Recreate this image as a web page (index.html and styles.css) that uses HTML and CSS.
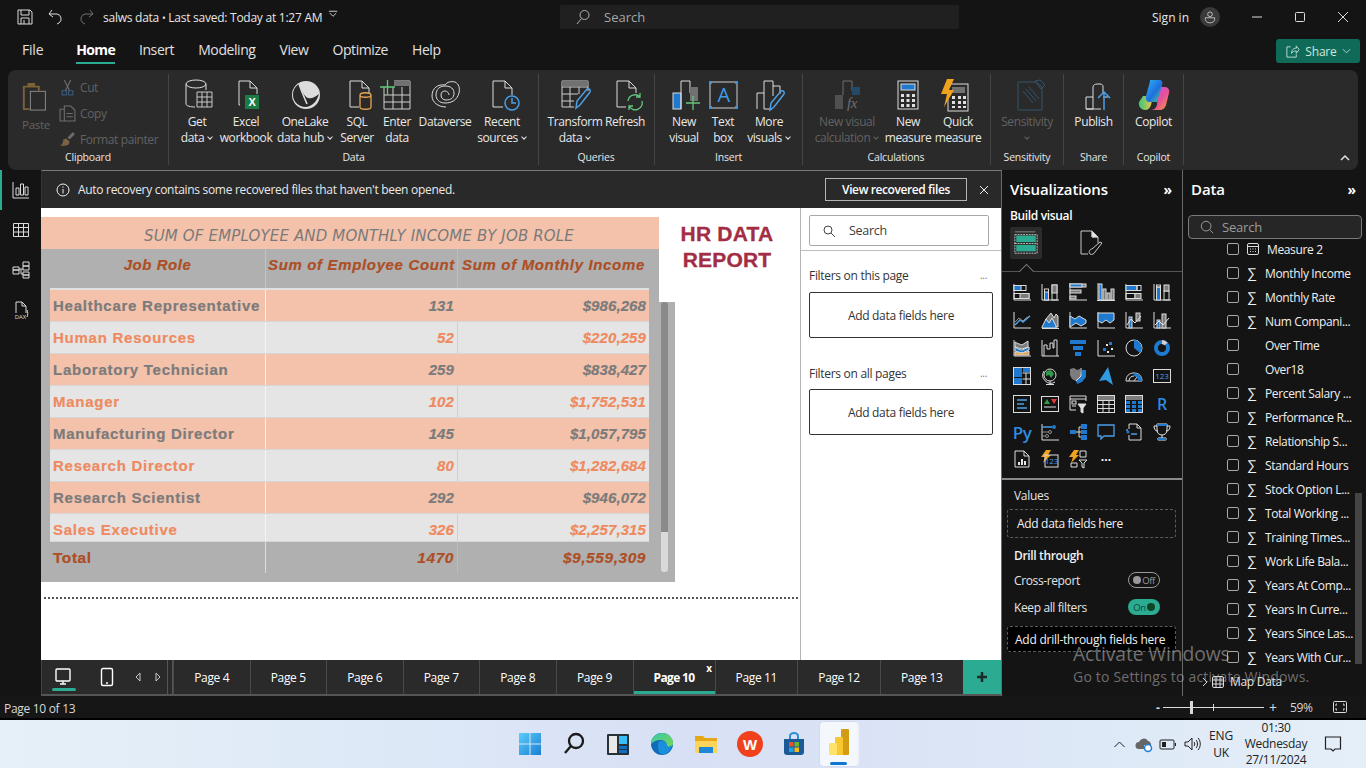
FILE: index.html
```html
<!DOCTYPE html>
<html lang="en">
<head>
<meta charset="utf-8">
<title>salws data - Power BI Desktop</title>
<link rel="stylesheet" href="styles.css">
</head>
<body>
<div class="app">
  <header class="topbar">
    <div class="quick">
      <svg class="ic q1" viewBox="0 0 18 18"><path d="M2 2h12l2 2v12H2zM5 2v5h8V2M5 16v-6h8v6M8 16v-4"/></svg>
      <svg class="ic q2" viewBox="0 0 18 18"><path d="M5 2 2 6l4 3M2 6h8a5 5 0 0 1 2 9l-2 1"/></svg>
      <svg class="ic q3 dimline" viewBox="0 0 18 18"><path d="m13 2 3 4-4 3M16 6H8a5 5 0 0 0-2 9l2 1"/></svg>
      <span class="doc">salws data <b class="dot">•</b> Last saved: Today at 1:27 AM</span>
      <svg class="ic q4" viewBox="0 0 12 8"><path d="M1 1h9M2 3l3.500 3.500L9 3"/></svg>
    </div>
    <div class="gsearch">
      <svg class="ic sm" viewBox="0 0 16 16"><circle cx="9.500" cy="6" r="4.500"/><path d="M6.500 9.500 2 15"/></svg>
      <span>Search</span>
    </div>
    <div class="account">
      <span class="signin">Sign in</span>
      <span class="avatar"><svg class="ic avatar-i" viewBox="0 0 18 18"><circle cx="9" cy="5.500" r="3"/><path d="M3 10h12v2a6 4.500 0 0 1-12 0z"/></svg></span>
      <div class="winctl">
        <svg class="ic wc" viewBox="0 0 12 12"><path d="M1 6h10"/></svg>
        <svg class="ic wc" viewBox="0 0 12 12"><rect x="1.500" y="1.500" width="9" height="9" rx="1"/></svg>
        <svg class="ic wc" viewBox="0 0 12 12"><path d="m1 1 10 10M11 1 1 11"/></svg>
      </div>
    </div>
  </header>

  <nav class="menubar">
    <span class="mi mi-file">File</span>
    <span class="mi mi-on">Home</span>
    <span class="mi">Insert</span>
    <span class="mi">Modeling</span>
    <span class="mi">View</span>
    <span class="mi">Optimize</span>
    <span class="mi">Help</span>
    <button class="share">
      <svg class="ic sh" viewBox="0 0 16 16"><path d="M6 3H2v11h10v-3M7 10c0-4 2-5.500 5-5.500V2l3 4-3 4V7.500C9.500 7.500 8 8 7 10z"/></svg>
      <span>Share</span>
      <svg class="ic chev" viewBox="0 0 10 6"><path d="m1 1 4 4 4-4"/></svg>
    </button>
  </nav>

  <section class="ribbon">
    <div class="grp g-clip">
      <div class="grp-body clip">
        <div class="paste">
          <svg class="ic r32" viewBox="0 0 32 34"><path class="brown" d="M2 6h5V3h8v3h5v5h-2V8H4v22h5v2H2z"/><rect class="gline" x="10" y="12" width="16" height="20"/></svg>
          <span class="dis">Paste</span>
        </div>
        <div class="clip-list">
          <div class="cl"><svg class="ic r16 dimline" viewBox="0 0 16 16"><path d="m5 1 5 10M11 1 6 11"/><rect class="scis" x="3" y="11" width="4" height="4"/><rect class="scis" x="9" y="11" width="4" height="4"/></svg><span class="dis">Cut</span></div>
          <div class="cl"><svg class="ic r16 dimline" viewBox="0 0 16 16"><path d="M5 4H1v11h4M5 1h6l4 4v10H5zM7 8h6M7 11h6"/></svg><span class="dis">Copy</span></div>
          <div class="cl"><svg class="ic r16" viewBox="0 0 16 16"><path class="brownf" d="M1 14c2-1 3-3 3-6l3-1 3 3-1 3c-2 1-5 1-8 1z"/><path class="dimf" d="m8 6 5-5 2 2-5 5z"/></svg><span class="dis">Format painter</span></div>
        </div>
      </div>
      <div class="grp-label">Clipboard</div>
    </div>

    <div class="grp g-data">
      <div class="grp-body">
        <div class="rb w36">
          <svg class="ic r32" viewBox="-3 0 32 32"><ellipse cx="12" cy="5" rx="10" ry="4"/><path d="M2 5v20c0 2 5 3 9 3M22 5v6"/><path class="tbl" d="M13 13h15v15H13zM13 18h15M13 23h15M18 13v15M23 13v15"/></svg>
          <span>Get</span><span>data<i class="cv"></i></span>
        </div>
        <div class="rb w62">
          <svg class="ic r32" viewBox="-3 0 32 32"><path d="M7 26H6V2h11l7 7v6M17 2v7h7"/><rect class="xl" x="12" y="16" width="14" height="14"/><text class="xltxt" x="19" y="27">X</text></svg>
          <span>Excel</span><span>workbook</span>
        </div>
        <div class="rb w56">
          <svg class="ic r32" viewBox="-1 0 32 32"><circle class="olk" cx="16" cy="16" r="14"/><path class="olk2" d="M9 5c3 8 6 13 9 14 4 1 7-1 11-4-2 7-6 12-13 13-8 0-13-6-13-12S6 7 9 5z"/><path class="olk3" d="M9 5c3 9 6 15 8 20"/></svg>
          <span>OneLake</span><span>data hub<i class="cv"></i></span>
        </div>
        <div class="rb w48">
          <svg class="ic r32" viewBox="-4 0 32 32"><path d="M14 28H5V2h12l7 7v5M17 2v7h7"/><path class="or" d="M15 16c0-3 11-3 11 0v12c0 3-11 3-11 0zM15 16c0 3 11 3 11 0"/></svg>
          <span>SQL</span><span>Server</span>
        </div>
        <div class="rb w32">
          <svg class="ic r32" viewBox="1 0 32 32"><path class="tbl2" d="M4 8v22h26V2h-16M4 16h26M4 23h26M13 8v22M22 8v22"/><rect class="gr" x="14" y="2" width="16" height="5"/><path class="grn" d="M0 8h15M7.500 1v15"/></svg>
          <span>Enter</span><span>data</span>
        </div>
        <div class="rb w64">
          <svg class="ic r32" viewBox="-1 0 32 32"><path d="M16 28C8 28 2 23 2 17 2 9 8 5 15 6M15 6c2-3 6-4 10-3 4 2 5 6 4 11-2 7-7 10-14 10-6 0-9-4-9-8 0-6 4-9 9-9 6 0 9 3 9 7 0 5-3 7-8 7-3 0-5-2-5-5s2-4 4-4 4 2 4 4"/></svg>
          <span>Dataverse</span><span>&nbsp;</span>
        </div>
        <div class="rb w50">
          <svg class="ic r32" viewBox="-2 0 32 32"><path d="M15 28H5V2h12l7 7v7M17 2v7h7"/><circle class="bls" cx="24" cy="24" r="7"/><path class="bls" d="M24 19v5h4"/></svg>
          <span>Recent</span><span>sources<i class="cv"></i></span>
        </div>
      </div>
      <div class="grp-label">Data</div>
    </div>

    <div class="grp g-query">
      <div class="grp-body">
        <div class="rb w54">
          <svg class="ic r32" viewBox="-1 0 32 32"><path class="tbl2" d="M14 28H2V2h26v10M2 8h26M2 15h16M2 22h12M10 8v20M19 8v7"/><path class="gr" d="M2 2h26v5H2z"/><path class="bls2" d="m16 29 1-7 10-12c2-1 4 1 3 3L20 26z"/></svg>
          <span>Transform</span><span>data<i class="cv"></i></span>
        </div>
        <div class="rb w46">
          <svg class="ic r32" viewBox="-3 0 32 32"><path d="M14 28H5V2h12l7 7v5M17 2v7h7"/><path class="grn" d="M16 22a7 7 0 0 1 12-4M30 22a7 7 0 0 1-13 5M28 14v4h-4M17 31v-4h4"/></svg>
          <span>Refresh</span><span>&nbsp;</span>
        </div>
      </div>
      <div class="grp-label">Queries</div>
    </div>

    <div class="grp g-insert">
      <div class="grp-body">
        <div class="rb w38">
          <svg class="ic r32" viewBox="-4 0 32 32"><rect class="bf" x="1" y="14" width="8" height="16"/><path d="M9 30V2h9v12"/><rect class="gr" x="18" y="8" width="8" height="14"/><path class="grn" d="M14 24h14M21 17v14"/></svg>
          <span>New</span><span>visual</span>
        </div>
        <div class="rb w40">
          <svg class="ic r32" viewBox="-1 0 32 32"><rect class="tb" x="2" y="3" width="27" height="26"/><path class="dots" d="M1 2h3v3H1zM27 2h3v3h-3zM1 27h3v3H1zM27 27h3v3h-3z"/><text class="atx" x="15.500" y="23">A</text></svg>
          <span>Text</span><span>box</span>
        </div>
        <div class="rb w52">
          <svg class="ic r32" viewBox="-2 0 32 32"><path d="M2 30V14h7V2h9v15M9 14v16h8M18 7h7v8"/><path class="bls2" d="m15 31 1-7 10-12c2-1 4 1 3 3L19 28z"/></svg>
          <span>More</span><span>visuals<i class="cv"></i></span>
        </div>
      </div>
      <div class="grp-label">Insert</div>
    </div>

    <div class="grp g-calc">
      <div class="grp-body">
        <div class="rb w70">
          <svg class="ic r32" viewBox="0 0 32 32"><rect class="dimf2" x="4" y="16" width="8" height="14"/><path class="dimline" d="M12 16V2h9v10"/><rect class="dimblue" x="21" y="8" width="8" height="8"/><text class="fx" x="16" y="29">fx</text></svg>
          <span class="dis">New visual</span><span class="dis">calculation<i class="cv"></i></span>
        </div>
        <div class="rb w52">
          <svg class="ic r32" viewBox="0 0 32 32"><rect x="6" y="2" width="20" height="28"/><rect class="bf" x="9" y="5" width="14" height="6"/><path class="keys" d="M9 15h3v3H9zM14.500 15h3v3h-3zM20 15h3v3h-3zM9 20h3v3H9zM14.500 20h3v3h-3zM20 20h3v3h-3zM9 25h3v3H9zM14.500 25h3v3h-3zM20 25h3v3h-3z"/></svg>
          <span>New</span><span>measure</span>
        </div>
        <div class="rb w48">
          <svg class="ic r32" viewBox="2 0 32 32"><rect x="8" y="5" width="20" height="27"/><rect class="gr" x="12" y="8" width="13" height="6"/><path class="keys" d="M12 17h3v3h-3zM18 17h3v3h-3zM23 17h3v3h-3zM12 22h3v3h-3zM18 22h3v3h-3zM23 22h3v3h-3zM12 27h3v2h-3zM18 27h3v2h-3zM23 27h3v2h-3z"/><path class="bolt" d="M7 0h7L9 11h5L4 28l3-13H1z"/></svg>
          <span>Quick</span><span>measure</span>
        </div>
      </div>
      <div class="grp-label">Calculations</div>
    </div>

    <div class="grp g-sens">
      <div class="grp-body center">
        <div class="rb wfull">
          <svg class="ic r32" viewBox="-4 0 32 32"><path class="dimblues" d="M3 3h18l6 5v23H3zM8 12l10 12M11 10l10 12M14 8l10 12M20 2l6 8 4-4-5-5z"/></svg>
          <span class="dis">Sensitivity</span><span class="dis"><i class="cv cv-only"></i></span>
        </div>
      </div>
      <div class="grp-label">Sensitivity</div>
    </div>

    <div class="grp g-share">
      <div class="grp-body center">
        <div class="rb wfull">
          <svg class="ic r32" viewBox="-6 0 32 32"><path d="M2 30V18h7v12zM9 18V8c0-2 2-3 4-3h3c2 0 3 1 3 3v7M19 18h5M2 30h15"/><path class="bls" d="M20 31V13M14 19l6-6 6 6"/></svg>
          <span>Publish</span><span>&nbsp;</span>
        </div>
      </div>
      <div class="grp-label">Share</div>
    </div>

    <div class="grp g-copilot">
      <div class="grp-body center">
        <div class="rb wfull">
          <svg class="ic r32 nostroke" viewBox="0 0 32 32">
            <defs>
              <linearGradient id="cp1" x1="0" y1="0" x2="1" y2="1"><stop offset="0" stop-color="#2bb7f3"/><stop offset=".55" stop-color="#1f6fe0"/><stop offset="1" stop-color="#48d67b"/></linearGradient>
              <linearGradient id="cp2" x1="0" y1="0" x2="1" y2="1"><stop offset="0" stop-color="#a55cf0"/><stop offset=".55" stop-color="#e84f9d"/><stop offset="1" stop-color="#f4a52d"/></linearGradient>
              <linearGradient id="cp3" x1="0" y1="0" x2="1" y2="0"><stop offset="0" stop-color="#35c77d"/><stop offset="1" stop-color="#f6c544"/></linearGradient>
            </defs>
            <path class="cp2" d="M20 8h7c3 0 5 3 4 6l-3 12c-1 3-3 5-7 5H12c4 0 6-2 7-5z"/>
            <path class="cp3" d="M5 17h10l-2 9c-1 3-3 5-6 5-4 0-7-4-6-8z"/>
            <path class="cp1" d="M12 1h9c3 0 4 2 3 5l-5 17h-7c-3 0-5-2-4-6l3-11c1-3 1-5 1-5z"/>
          </svg>
          <span>Copilot</span><span>&nbsp;</span>
        </div>
      </div>
      <div class="grp-label">Copilot</div>
    </div>
    <svg class="ic collapse" viewBox="0 0 10 6"><path d="m1 5 4-4 4 4"/></svg>
  </section>

  <main class="work">
    <aside class="rail">
      <div class="rail-item rail-on"><svg class="ic r18" viewBox="0 0 18 18"><path d="M1 1v16h16M4 14V7h3v7zM8.500 14V3h3v11zM13 14V6h3v8z"/></svg></div>
      <div class="rail-item"><svg class="ic r18" viewBox="0 0 18 18"><path d="M1.500 2.500h15v13h-15zM1.500 6.500h15M1.500 11h15M6.500 2.500v13M11.500 2.500v13"/></svg></div>
      <div class="rail-item"><svg class="ic r18" viewBox="0 0 18 18"><path d="M11 1h6v4h-6zM11 5h6v4h-6zM1 6h6v3H1zM1 9h6v4H1zM11 11h6v3h-6zM11 14h6v3h-6zM7 8h4M9 8v5h2"/></svg></div>
      <div class="rail-item rail-dax"><svg class="ic r18" viewBox="0 0 18 18"><path d="M4 12V1h6l4 4v7M10 1v4h4"/><path d="M15 9c1 2 1 5 0 7"/></svg><span class="dax">DAX</span></div>
    </aside>

    <div class="center-col">
      <div class="notice">
        <svg class="ic info" viewBox="0 0 14 14"><circle cx="7" cy="7" r="6"/><path d="M7 6v4.500M7 3.500v1.200"/></svg>
        <span>Auto recovery contains some recovered files that haven't been opened.</span>
        <button class="recover">View recovered files</button>
        <svg class="ic close" viewBox="0 0 12 12"><path d="m2 2 8 8M10 2l-8 8"/></svg>
      </div>

      <div class="stage">
        <div class="canvas">
          <div class="visual">
            <div class="v-title">SUM OF EMPLOYEE AND MONTHLY INCOME BY JOB ROLE</div>
            <div class="v-table">
              <div class="row head"><span class="c1">Job Role</span><span class="c2">Sum of Employee Count</span><span class="c3">Sum of Monthly Income</span></div>
              <div class="row a"><span class="c1">Healthcare Representative</span><span class="c2">131</span><span class="c3">$986,268</span></div>
              <div class="row b"><span class="c1">Human Resources</span><span class="c2">52</span><span class="c3">$220,259</span></div>
              <div class="row a"><span class="c1">Laboratory Technician</span><span class="c2">259</span><span class="c3">$838,427</span></div>
              <div class="row b"><span class="c1">Manager</span><span class="c2">102</span><span class="c3">$1,752,531</span></div>
              <div class="row a"><span class="c1">Manufacturing Director</span><span class="c2">145</span><span class="c3">$1,057,795</span></div>
              <div class="row b"><span class="c1">Research Director</span><span class="c2">80</span><span class="c3">$1,282,684</span></div>
              <div class="row a"><span class="c1">Research Scientist</span><span class="c2">292</span><span class="c3">$946,072</span></div>
              <div class="row b last"><span class="c1">Sales Executive</span><span class="c2">326</span><span class="c3">$2,257,315</span></div>
              <div class="row total"><span class="c1">Total</span><span class="c2">1470</span><span class="c3">$9,559,309</span></div>
              <div class="vscroll"></div>
            </div>
          </div>
          <div class="hr-title">HR DATA<br>REPORT</div>
          <div class="dotline"></div>
        </div>

        <aside class="filters">
          <div class="f-top">
            <div class="f-search">
              <svg class="ic dark r14" viewBox="0 0 14 14"><circle cx="6" cy="6" r="4"/><path d="m9 9 4 4"/></svg>
              <span>Search</span>
            </div>
          </div>
          <div class="f-head f-head1"><span>Filters on this page</span><span class="more">...</span></div>
          <div class="f-box">Add data fields here</div>
          <div class="f-head f-head2"><span>Filters on all pages</span><span class="more">...</span></div>
          <div class="f-box">Add data fields here</div>
        </aside>
      </div>

      <div class="pagebar">
        <div class="devices">
          <div class="dev dev-on"><svg class="ic r18" viewBox="0 0 18 18"><rect x="2" y="1" width="14" height="12" rx="1"/><path d="M6 16h6M9 13v3"/></svg></div>
          <div class="dev"><svg class="ic r18" viewBox="0 0 18 18"><rect x="3.500" y=".500" width="11" height="17" rx="1.500"/><path d="M8 15h2"/></svg></div>
          <svg class="ic arrow" viewBox="0 0 6 10"><path d="M5 1 1 5l4 4z"/></svg>
          <svg class="ic arrow" viewBox="0 0 6 10"><path d="m1 1 4 4-4 4z"/></svg>
        </div>
        <div class="tab">Page 4</div>
        <div class="tab">Page 5</div>
        <div class="tab">Page 6</div>
        <div class="tab">Page 7</div>
        <div class="tab">Page 8</div>
        <div class="tab tab-s">Page 9</div>
        <div class="tab tab-on">Page 10<span class="tab-x">x</span></div>
        <div class="tab tab-w">Page 11</div>
        <div class="tab tab-w">Page 12</div>
        <div class="tab tab-w">Page 13</div>
        <div class="tab-add"><svg class="ic plus" viewBox="0 0 12 12"><path d="M6 1v10M1 6h10"/></svg></div>
      </div>
    </div>

    <aside class="vis">
      <div class="pane-head"><span>Visualizations</span><span class="dbl">»</span></div>
      <div class="sub">Build visual</div>
      <div class="vis-tabs">
        <div class="vt-on">
          <svg class="ic r28" viewBox="0 0 28 28"><path class="gline" d="M2 2h22"/><rect class="tealf" x="3.500" y="6" width="21" height="7"/><rect class="tealf" x="3.500" y="16" width="21" height="7"/><path class="dash" d="M2 5h24v20H2zM2 14.500h24"/></svg>
        </div>
        <svg class="ic vt2" viewBox="0 0 26 26"><path d="M10 24H3V1h11l6 6v6M14 1v6h6"/><path class="fillw" d="M14 1l6 6h-6z"/><path d="M12 24c-2-2 0-5 2-5l8-7 2 1-7 9c-1 2-3 3-5 2z"/></svg>
      </div>
      <div class="notchline"></div>

      <div class="vizgrid">
        <svg class="ic v" viewBox="0 0 18 18"><path d="M1 1v16h17"/><rect x="1" y="2.500" width="12" height="5"/><rect class="bf" x="1" y="2.500" width="7" height="5"/><rect x="1" y="10.500" width="15" height="5"/><rect class="gf" x="7" y="10.500" width="9" height="5"/></svg>
        <svg class="ic v" viewBox="0 0 18 18"><path d="M1 1v16h17"/><rect x="3.500" y="6" width="4" height="11"/><rect class="bf" x="3.500" y="9" width="4" height="8"/><rect x="11" y="2" width="5" height="15"/><rect class="gf" x="11" y="2" width="5" height="8"/></svg>
        <svg class="ic v" viewBox="0 0 18 18"><path d="M1 0v18"/><rect class="gf" x="1" y="1" width="16" height="3"/><rect class="bf" x="1" y="1" width="12" height="3"/><rect class="gf" x="1" y="7" width="11" height="3"/><rect class="gf" x="1" y="13" width="6" height="3"/><path d="M2 17h16"/></svg>
        <svg class="ic v" viewBox="0 0 18 18"><path d="M0 17.500h18M1 0v17"/><rect class="bf" x="2" y="1" width="3" height="16"/><rect class="gf" x="6" y="6" width="3" height="11"/><rect class="gf" x="10" y="10" width="3" height="7"/><rect class="gf" x="14" y="6" width="3" height="11"/></svg>
        <svg class="ic v" viewBox="0 0 18 18"><path d="M1 1v16h17"/><rect class="bf" x="1" y="2.500" width="11" height="5"/><rect x="12" y="2.500" width="4" height="5"/><rect x="1" y="10.500" width="9" height="5"/><rect class="gf" x="10" y="10.500" width="6" height="5"/></svg>
        <svg class="ic v" viewBox="0 0 18 18"><path d="M1 1v16h17"/><rect class="bf" x="3.500" y="4" width="4" height="13"/><rect x="3.500" y="2" width="4" height="2"/><rect x="11" y="8" width="5" height="9"/><rect class="gf" x="11" y="2" width="5" height="6"/></svg>

        <svg class="ic v" viewBox="0 0 18 18"><path d="M1 1v16h17"/><path class="bls" d="m2 14 5-5 3 2 7-6"/><path class="gline" d="m2 11 4-4 4 3 3-3 4-2"/></svg>
        <svg class="ic v" viewBox="0 0 18 18"><path class="gf" d="m5 8 5-6 3 5 2-4 2 2v11H5z"/><path class="bf" d="m1 16 4-8 3 4 3-5 4 8v2H1z"/><path d="M1 17.500h17"/></svg>
        <svg class="ic v" viewBox="0 0 18 18"><path d="M1 1v16h17"/><path class="bf" d="m1 5 5 3 4-3 7 4v3l-5 3-5-3-6 4z"/></svg>
        <svg class="ic v" viewBox="0 0 18 18"><path d="M1 1v16h17"/><path class="bf" d="M1 2h16v7l-4 3-4-3-4 3-4-2z"/></svg>
        <svg class="ic v" viewBox="0 0 18 18"><path d="M1 1v16h17"/><rect class="bf" x="4" y="6" width="3" height="11"/><rect class="gf" x="11" y="2" width="4" height="8"/><path class="bright" d="m2 14 4-6 4 4 6-7"/></svg>
        <svg class="ic v" viewBox="0 0 18 18"><path d="M1 1v16h17"/><rect class="bf" x="4" y="9" width="3" height="8"/><rect class="gf" x="9" y="3" width="4" height="14"/><path class="bright" d="m2 14 4-4 4 4 6-7"/></svg>

        <svg class="ic v" viewBox="0 0 18 18"><path d="M1 1v16h17"/><path class="gf" d="M2 3c3 2 5 2 7 3l6-4v6l-6 2-7-2z"/><path class="bf" d="M2 8c3 2 5 3 7 3l7-3v3l-7 3-7-2z"/><path class="orf" d="M2 13c4 1 8 2 14-1v4H2z"/></svg>
        <svg class="ic v" viewBox="0 0 18 18"><path d="M1 1v16h17"/><path d="M3 17V6h3v4h3V4h3v5h1V1h3v16"/></svg>
        <svg class="ic v" viewBox="0 0 18 18"><path class="bf nostr" d="M1 1h16v4H1zM4 7h10v4H4zM6 13h6v4H6z"/></svg>
        <svg class="ic v" viewBox="0 0 18 18"><path d="M1 1v16h17"/><path class="bf nostr" d="M6 9h3v3H6zM12 3h3v3h-3z"/><path class="wf nostr" d="M9 5h2v2H9zM14 9h2v2h-2zM10 12h2v2h-2z"/></svg>
        <svg class="ic v" viewBox="0 0 18 18"><circle cx="9" cy="9" r="8"/><path class="bf nostr" d="M9 1a8 8 0 0 1 6 13L9 9z"/></svg>
        <svg class="ic v" viewBox="0 0 18 18"><circle class="donut" cx="9" cy="9" r="6"/><path class="donut2" d="M9 3a6 6 0 0 1 4 2"/></svg>

        <svg class="ic v" viewBox="0 0 18 18"><rect x=".500" y=".500" width="17" height="17"/><path class="bf nostr" d="M1 1h8v9H1zM1 11h8v6H1zM10 1h7v4h-7z"/><path d="M9.500 6h8M9.500 12h8M13 6v12"/></svg>
        <svg class="ic v" viewBox="0 0 18 18"><circle cx="9" cy="8" r="6"/><path class="grnf nostr" d="M5 5c2-2 5-2 6-1l2 3-3 4-2-3-3 1z"/><path d="M9 14v3M5 17.500h8M3 4a8 8 0 0 0 11 11"/></svg>
        <svg class="ic v" viewBox="0 0 18 18"><path class="gf nostr" d="M1 2 5 1l3 2 3-1 1 7-5 5-4-2-2-4z"/><path class="bf nostr" d="M13 3h4v7l-4 5-5 2-1-3 5-5z"/><path class="bright" d="M12 1v8L7 14"/></svg>
        <svg class="ic v" viewBox="0 0 18 18"><path class="bf2 nostr" d="M11 0 2 14l7-1 7 5z"/></svg>
        <svg class="ic v" viewBox="0 0 18 18"><path d="M1 14c0-5 3-8 8-8s8 3 8 8zM4 14c0-3 2-5 5-5M9 14l3-4"/><path class="bf nostr" d="M9 6c4 0 8 3 8 8h-4c0-3-1-4-4-5z"/></svg>
        <svg class="ic v" viewBox="0 0 18 18"><rect x=".500" y="2.500" width="17" height="13"/><text class="n123" x="9" y="12">123</text></svg>

        <svg class="ic v" viewBox="0 0 18 18"><rect x=".500" y=".500" width="17" height="17"/><path class="bls" d="M4 5h10M4 9h7M4 13h10"/></svg>
        <svg class="ic v" viewBox="0 0 18 18"><rect x=".500" y="1.500" width="17" height="15"/><path class="grnf nostr" d="m6 4 3 5H3z"/><path class="redf nostr" d="M10 4h6l-3 5z"/><path d="M3 12h12"/></svg>
        <svg class="ic v" viewBox="0 0 18 18"><path d="M1 11V1h16v5M1 4h16M7 15H1v-4"/><rect x="3" y="6" width="4" height="3"/><path d="M3 11h4"/><path class="wf" d="M9 9h8l-3 4v5l-2-1v-4z"/></svg>
        <svg class="ic v" viewBox="0 0 18 18"><rect x=".500" y=".500" width="17" height="17"/><path class="gf nostr" d="M1 1h16v4H1z"/><path d="M.500 5.500h17M.500 9.500h17M.500 13.500h17M6 5v13M12 5v13"/></svg>
        <svg class="ic v" viewBox="0 0 18 18"><rect x=".500" y=".500" width="17" height="17"/><path class="gf nostr" d="M1 1h16v4H1z"/><path class="bf nostr" d="M1 6h4v3H1zM7 6h4v3H7zM13 6h4v3h-4zM1 10h4v3H1zM7 10h4v3H7zM13 10h4v3h-4zM1 14h4v3H1zM7 14h4v3H7zM13 14h4v3h-4z"/></svg>
        <span class="v vt vt-r">R</span>

        <span class="v vt vt-py">Py</span>
        <svg class="ic v" viewBox="0 0 18 18"><path d="M1 1v16h17"/><path class="bls" d="M1 4h10"/><circle class="bf nostr" cx="13" cy="4" r="2"/><path class="gline" d="M1 9h6M1 13h3"/><circle class="gcirc" cx="9" cy="9" r="1.500"/><circle class="gcirc" cx="6" cy="13" r="1.500"/></svg>
        <svg class="ic v" viewBox="0 0 18 18"><path d="M7 9h3M10 4v10h3M10 4h3M10 9h3"/><path class="bf nostr" d="M1 7h6v4H1zM12 1h6v5h-6zM12 7h6v4h-6zM12 12h6v5h-6z"/></svg>
        <svg class="ic v" viewBox="0 0 18 18"><path class="bls3" d="M1 2h16v11H7l-3 3v-3H1z"/></svg>
        <svg class="ic v" viewBox="0 0 18 18"><path d="M4 6V1h8l4 4v12H4v-5M12 1v4h4"/><path class="bls" d="M1 7h2M6 11h6"/><circle class="bf nostr" cx="3" cy="9" r="1.500"/></svg>
        <svg class="ic v" viewBox="0 0 18 18"><path class="bright" d="M4 1h10v6c0 3-2 5-5 5s-5-2-5-5zM4 3H1c0 3 1 5 4 5M14 3h3c0 3-1 5-4 5M9 12v3M5 17h8v-2H5z"/><path class="bf nostr" d="M4 1h10v2H4zM5 15h8v2H5z"/></svg>

        <svg class="ic v" viewBox="0 0 18 18"><path d="M2 17V1h9l5 5v11zM11 1v5h5"/><path class="wf nostr" d="M5 12h2v3H5zM8 9h2v6H8zM11 11h2v4h-2z"/></svg>
        <svg class="ic v" viewBox="0 0 18 18"><path class="bolt" d="M5 0h5L7 5h3L2 13l2-6H0z"/><rect x="4" y="5" width="13" height="12"/><text class="n123" x="10.500" y="14">123</text></svg>
        <svg class="ic v" viewBox="0 0 18 18"><path class="bolt" d="M5 0h5L7 5h3L2 13l2-6H0z"/><path d="M11 1h6v6h-6zM2 13h6v4H2zM10 10h8l-3 3v5l-2-1v-4z"/></svg>
        <span class="v vt vt-more">...</span>
      </div>

      <div class="vis-sep"></div>
      <div class="well-label">Values</div>
      <div class="well">Add data fields here</div>
      <div class="drill-title">Drill through</div>
      <div class="toggle-row tr1"><span>Cross-report</span><span class="toggle off"><i></i>Off</span></div>
      <div class="toggle-row tr2"><span>Keep all filters</span><span class="toggle on">On<i></i></span></div>
      <div class="well well-drill">Add drill-through fields here</div>
    </aside>

    <aside class="data">
      <div class="pane-head"><span>Data</span><span class="dbl">»</span></div>
      <div class="d-search">
        <svg class="ic r14 dimline2" viewBox="0 0 16 16"><circle cx="7" cy="7" r="5.500"/><path d="m11 11 4 4"/></svg>
        <span>Search</span>
      </div>
      <div class="d-listwrap">
        <div class="d-list">
          <div class="d-row"><i class="chk"></i><svg class="ic sig" viewBox="0 0 12 12"><rect x=".500" y=".500" width="11" height="11" rx="1.500"/><path d="M.500 3.500h11M3 6h1M5.500 6h1M8 6h1M3 8.500h1M5.500 8.500h1M8 8.500h1"/></svg><span>Measure 2</span></div>
          <div class="d-row"><i class="chk"></i><span class="sigma">∑</span><span>Monthly Income</span></div>
          <div class="d-row"><i class="chk"></i><span class="sigma">∑</span><span>Monthly Rate</span></div>
          <div class="d-row"><i class="chk"></i><span class="sigma">∑</span><span>Num Compani...</span></div>
          <div class="d-row"><i class="chk"></i><span class="sigma"></span><span>Over Time</span></div>
          <div class="d-row"><i class="chk"></i><span class="sigma"></span><span>Over18</span></div>
          <div class="d-row"><i class="chk"></i><span class="sigma">∑</span><span>Percent Salary ...</span></div>
          <div class="d-row"><i class="chk"></i><span class="sigma">∑</span><span>Performance R...</span></div>
          <div class="d-row"><i class="chk"></i><span class="sigma">∑</span><span>Relationship S...</span></div>
          <div class="d-row"><i class="chk"></i><span class="sigma">∑</span><span>Standard Hours</span></div>
          <div class="d-row"><i class="chk"></i><span class="sigma">∑</span><span>Stock Option L...</span></div>
          <div class="d-row"><i class="chk"></i><span class="sigma">∑</span><span>Total Working ...</span></div>
          <div class="d-row"><i class="chk"></i><span class="sigma">∑</span><span>Training Times...</span></div>
          <div class="d-row"><i class="chk"></i><span class="sigma">∑</span><span>Work Life Bala...</span></div>
          <div class="d-row"><i class="chk"></i><span class="sigma">∑</span><span>Years At Comp...</span></div>
          <div class="d-row"><i class="chk"></i><span class="sigma">∑</span><span>Years In Curre...</span></div>
          <div class="d-row"><i class="chk"></i><span class="sigma">∑</span><span>Years Since Las...</span></div>
          <div class="d-row"><i class="chk"></i><span class="sigma">∑</span><span>Years With Cur...</span></div>
        </div>
        <div class="d-scroll"></div>
      </div>
      <div class="d-table">
        <svg class="ic d-chev" viewBox="0 0 6 10"><path d="m1 1 4 4-4 4"/></svg>
        <svg class="ic sig2" viewBox="0 0 12 12"><rect x=".500" y=".500" width="11" height="11" rx="1.500"/><path d="M.500 4h11M.500 8h11M4 .500v11M8 .500v11"/></svg>
        <span>Map Data</span>
      </div>
    </aside>
    <div class="activate"><div class="a1">Activate Windows</div><div class="a2">Go to Settings to activate Windows.</div></div>
  </main>

  <footer class="status">
    <span class="st-text">Page 10 of 13</span>
    <div class="zoomctl">
      <span class="zm">-</span>
      <div class="slider"><i class="thumb"></i><i class="tick"></i></div>
      <span class="zp">+</span>
      <span class="zv">59%</span>
      <svg class="ic fit" viewBox="0 0 14 12"><rect x=".500" y=".500" width="13" height="11" rx="1"/><path class="bgline" d="M4 3H3v2M10 3h1v2M4 9H3V7M10 9h1V7"/></svg>
    </div>
  </footer>

  <footer class="taskbar">
    <div class="tb-apps">
      <div class="app-i"><svg class="t24 nostroke" viewBox="0 0 24 24"><defs><linearGradient id="win" x1="0" y1="0" x2="1" y2="1"><stop offset="0" stop-color="#5ccdf9"/><stop offset="1" stop-color="#1a7fd4"/></linearGradient></defs><path class="winf" d="M1 1h10.500v10.500H1zM12.500 1H23v10.500H12.500zM1 12.500h10.500V23H1zM12.500 12.500H23V23H12.500z"/></svg></div>
      <div class="app-i"><svg class="t24" viewBox="0 0 24 24"><circle class="mag" cx="14" cy="9" r="7"/><path class="mag" d="M9 14 3 21"/></svg></div>
      <div class="app-i"><svg class="t24 nostroke" viewBox="0 0 24 24"><rect class="wg0" x="1" y="2" width="22" height="21" rx="1"/><rect class="wg1" x="3" y="4" width="8" height="17"/><rect class="wg2" x="13" y="4" width="8" height="8"/><rect class="wg3" x="13" y="14" width="8" height="3"/><rect class="wg3" x="13" y="18" width="8" height="3"/></svg></div>
      <div class="app-i"><svg class="t24 nostroke" viewBox="0 0 24 24"><defs><linearGradient id="edge" x1="0" y1="0" x2="1" y2="1"><stop offset="0" stop-color="#37c6b0"/><stop offset="1" stop-color="#78d94b"/></linearGradient></defs><circle class="edge1" cx="12" cy="12" r="11"/><path class="edge2" d="M1 12C1 5 7 1 12 1c6 0 11 4 11 10 0 4-4 5-6 4 0-4-2-7-6-7-5 0-8 2-10 4z"/><path class="edge3" d="M8 12c0-2 2-3 4-3 3 0 5 2 5 5 2 1 4 0 5-1-1 6-6 10-10 9-4-1-4-6-4-10z"/></svg></div>
      <div class="app-i"><svg class="t24 nostroke" viewBox="0 0 24 24"><path class="fold1" d="M1 4h8l2 2h12v15H1z"/><path class="fold2" d="M1 9h22v12H1z"/><path class="fold3" d="M5 15h14v6H5z"/></svg></div>
      <div class="app-i"><span class="wps">W</span></div>
      <div class="app-i"><svg class="t24 nostroke" viewBox="0 0 24 24"><path class="st0" d="M2 7h20v13a3 3 0 0 1-3 3H5a3 3 0 0 1-3-3z"/><path class="st1" d="M8 7V4a4 3 0 0 1 8 0v3"/><rect class="sr" x="7" y="10" width="4.500" height="4.500"/><rect class="sg" x="12.500" y="10" width="4.500" height="4.500"/><rect class="sb" x="7" y="15.500" width="4.500" height="4.500"/><rect class="sy" x="12.500" y="15.500" width="4.500" height="4.500"/></svg></div>
      <div class="app-i app-active"><svg class="t28 nostroke" viewBox="0 0 24 30"><rect class="pb3" x="14" y="2" width="8" height="26" rx="1"/><rect class="pb2" x="8" y="10" width="8" height="18" rx="1"/><rect class="pb1" x="2" y="16" width="8" height="12" rx="1"/></svg><i class="act"></i></div>
    </div>
    <div class="tray">
      <svg class="ic tr-chev" viewBox="0 0 12 8"><path d="m1 7 5-5 5 5"/></svg>
      <svg class="ic tr-i" viewBox="0 0 18 18"><path class="cl-f" d="M4 14a3.500 3.500 0 0 1 0-7 5 5 0 0 1 9-1 4 4 0 0 1 3 4H9v4z"/><circle class="cl-s" cx="13" cy="13" r="3.500"/></svg>
      <svg class="ic tr-i" viewBox="0 0 18 18"><rect x="1" y="5" width="14" height="9" rx="1"/><rect class="bk" x="3" y="7" width="4" height="5"/><path d="M16.500 8v3"/></svg>
      <svg class="ic tr-i" viewBox="0 0 18 18"><path d="M2 7v4h3l4 4V3L5 7zM11 7c1 1 1 3 0 4M13 5c2 2 2 6 0 8M15 3c3 3 3 9 0 12"/></svg>
      <div class="lang"><span>ENG</span><span>UK</span></div>
      <div class="clock"><span>01:30</span><span>Wednesday</span><span>27/11/2024</span></div>
      <svg class="ic tr-note" viewBox="0 0 18 18"><path d="M1.500 2h15v12H11l-2 2-2-2H1.500z"/></svg>
    </div>
  </footer>
</div>
</body>
</html>
```

FILE: styles.css
```css
* { box-sizing: border-box; }
html, body { margin: 0; padding: 0; }
body {
  width: 1366px; height: 768px; overflow: hidden;
  font-family: "Open Sans", "Noto Sans", sans-serif;
  font-size: 12px; color: #e8e8e8; background: #141414;
}
button { font-family: inherit; cursor: default; }
.app { display: grid; grid-template-rows: 34px 36px 100px 526px 24px 48px; width: 1366px; height: 768px; }

/* shared icon defaults */
.ic { fill: none; stroke: #dcdcdc; stroke-width: 1; flex: none; display: block; overflow: visible; }
.nostroke { stroke: none; }
.nostr { stroke: none; }
.dimline { stroke: #6f6f6f; }
.dimline2 { stroke: #a8a8a8; }
.gline { stroke: #8e8e8e; }
.bf { fill: #1f79cf; }
.bf2 { fill: #2f9be0; }
.gf { fill: #7c7c7c; }
.wf { fill: #e4e4e4; }
.orf { fill: #e99a2c; }
.grnf { fill: #2f9a4a; }
.redf { fill: #e23a3a; }
.fillw { fill: #e8e8e8; }
.bright { stroke: #e4e4e4; }
.bls { stroke: #4a9ee6; stroke-width: 1.500; }
.bls2 { stroke: #4f9fe0; stroke-width: 1.500; }
.bls3 { stroke: #4a9ee6; stroke-width: 1.300; }
.grn { stroke: #63c77f; stroke-width: 1.300; }
.or { stroke: #e8a451; stroke-width: 1.300; }
.gr { fill: #717171; stroke: none; }
.tbl { stroke: #c8c8c8; }
.tbl2 { stroke: #cfcfcf; }
.brown { fill: #7d6238; stroke: none; }
.brownf { fill: #7a6444; stroke: none; }
.dimf { fill: #6a6a6a; stroke: none; }
.dimf2 { fill: #505050; stroke: none; }
.dimblue { fill: #254a68; stroke: none; }
.dimblues { stroke: #33546e; }
.scis { stroke: #3b5d7d; }
.keys { fill: #e0e0e0; stroke: none; }
.bolt { fill: #f0a11e; stroke: none; }
.xl { fill: #1c7a45; stroke: none; }
.xltxt { fill: #fff; stroke: none; font: 700 11px "Liberation Sans", sans-serif; text-anchor: middle; }
.atx { fill: #3f9ce6; stroke: none; font: 400 20px "Open Sans", sans-serif; text-anchor: middle; }
.tb { stroke: #cfcfcf; }
.dots { fill: #3b93dd; stroke: none; }
.fx { fill: #6f6f6f; stroke: none; font: italic 15px "Liberation Serif", serif; }
.olk { fill: #dcdcdc; stroke: none; }
.olk2 { fill: #2a2a2a; stroke: none; }
.olk3 { stroke: #dcdcdc; stroke-width: 1.500; }
.cp1 { fill: url(#cp1); }
.cp2 { fill: url(#cp2); }
.cp3 { fill: url(#cp3); }

/* title bar */
.topbar { display: flex; align-items: center; background: #141414; position: relative; }
.quick { display: flex; align-items: center; width: 560px; padding-left: 16px; }
.q1, .q2, .q3 { width: 18px; height: 18px; }
.q2 { margin-left: 13px; }
.q3 { margin-left: 12px; }
.doc { margin-left: 8px; font-size: 12px; letter-spacing: -.25px; color: #e6e6e6; white-space: nowrap; }
.dot { font-weight: 400; font-size: 10px; }
.q4 { width: 11px; height: 8px; margin-left: 6px; margin-top: -6px; }
.gsearch { width: 399px; height: 24px; background: #202020; border-radius: 2px; display: flex; align-items: center; padding-left: 15px; gap: 13px; color: #a6a6a6; font-size: 13px; }
.sm { width: 16px; height: 16px; stroke: #b0b0b0; }
.account { display: flex; align-items: center; margin-left: 193px; }
.signin { font-size: 12px; color: #e6e6e6; width: 48px; letter-spacing: 0; white-space: nowrap; }
.avatar { width: 20px; height: 20px; border-radius: 50%; background: #3a3a3a; display: flex; align-items: center; justify-content: center; margin-left: 0; }
.avatar-i { width: 14px; height: 14px; }
.winctl { display: flex; margin-left: 31px; gap: 31px; }
.wc { width: 12px; height: 12px; }

/* menu */
.menubar { display: flex; align-items: flex-start; padding: 6px 6px 0 22px; gap: 24px; font-size: 14px; background: #141414; }
.mi { color: #e0e0e0; letter-spacing: -.42px; height: 24px; white-space: nowrap; line-height: 20px; }
.mi-file { margin-right: 9px; letter-spacing: -.2px; }
.mi-on { font-weight: 700; color: #fff; border-bottom: 2px solid #2aab92; letter-spacing: -.7px; }
.share { margin-left: auto; width: 84px; height: 24px; margin-top: -1px; background: #0f6b58; color: #cfe5df; border: 0; border-radius: 3px; display: flex; align-items: center; justify-content: center; gap: 5px; font-size: 12px; letter-spacing: -.2px; padding: 0; }
.sh { width: 15px; height: 15px; stroke: #bfdcd5; }
.chev { width: 9px; height: 6px; stroke: #bfdcd5; }

/* ribbon */
.ribbon { margin: 0 8px; background: #2a2a2a; border-radius: 8px; display: flex; position: relative; height: 100px; }
.grp { display: flex; flex-direction: column; border-right: 1px solid #454545; margin: 4px 0 5px; }
.g-clip { width: 161px; }
.g-data { width: 370px; padding-left: 10px; }
.g-query { width: 116px; padding-left: 9px; }
.g-insert { width: 148px; padding-left: 10px; }
.g-calc { width: 188px; padding-left: 9px; }
.g-sens { width: 73px; }
.g-share { width: 60px; }
.g-copilot { width: 60px; }
.grp-body { display: flex; flex: 1; }
.grp-label { height: 16px; line-height: 16px; text-align: center; font-size: 10.500px; letter-spacing: -.2px; color: #e6e6e6; margin-left: -10px; }
.g-clip .grp-label, .g-sens .grp-label, .g-share .grp-label, .g-copilot .grp-label { margin-left: 0; }
.rb { display: flex; flex-direction: column; align-items: center; font-size: 12px; line-height: 16px; letter-spacing: -.4px; color: #e8e8e8; white-space: nowrap; padding-top: 5px; }
.rb span { height: 16px; }
.rb .r32 { margin-bottom: 3px; }
.r32 { width: 32px; height: 32px; }
.w32 { width: 32px; } .w36 { width: 36px; } .w38 { width: 38px; } .w40 { width: 40px; }
.w46 { width: 46px; } .w48 { width: 48px; } .w50 { width: 50px; } .w52 { width: 52px; }
.w54 { width: 54px; } .w56 { width: 56px; } .w62 { width: 62px; } .w64 { width: 64px; }
.w70 { width: 70px; } .wfull { width: 100%; }
.dis { color: #626262; }
.cv { display: inline-block; width: 4px; height: 4px; border-right: 1px solid currentColor; border-bottom: 1px solid currentColor; transform: rotate(45deg); margin: 0 1px 3px 4px; }
.cv-only { margin-left: 0; }
.collapse { position: absolute; right: 8px; bottom: 9px; width: 10px; height: 6px; stroke: #e0e0e0; stroke-width: 1.500; }
.clip { padding-left: 14px; }
.paste { display: flex; flex-direction: column; align-items: center; width: 28px; padding-top: 6px; font-size: 11.500px; letter-spacing: -.3px; }
.paste .r32 { width: 30px; height: 32px; margin-bottom: 5px; }
.clip-list { padding-top: 3px; margin-left: 9px; display: flex; flex-direction: column; gap: 6px; font-size: 12px; letter-spacing: -.4px; }
.cl { display: flex; align-items: center; height: 20px; gap: 4px; white-space: nowrap; }
.r16 { width: 17px; height: 17px; }

/* workspace */
.work { display: grid; grid-template-columns: 41px 960px 182px 183px; position: relative; height: 526px; }
.rail { background: #141414; }
.rail-item { height: 40px; display: flex; align-items: center; justify-content: center; position: relative; }
.rail-on { box-shadow: inset 2px 0 0 #2aab92; }
.r18 { width: 18px; height: 18px; }
.rail-dax { flex-direction: column; }
.dax { font-size: 6px; line-height: 6px; margin-top: -5px; color: #dcdcdc; }
.center-col { display: grid; grid-template-rows: 38px 452px 36px; }
.notice { display: flex; align-items: center; background: #292929; border-top: 1px solid #7a7a7a; border-left: 1px solid #333; padding: 0 11px 0 14px; font-size: 12px; letter-spacing: -.3px; }
.info { width: 14px; height: 14px; margin-right: 8px; stroke: #f0f0f0; }
.recover { margin-left: auto; width: 142px; height: 23px; background: transparent; border: 1px solid #b4b4b4; color: #fff; font-size: 12px; font-weight: 600; letter-spacing: -.4px; padding: 0; }
.close { width: 12px; height: 12px; margin-left: 11px; stroke: #f0f0f0; }
.stage { display: grid; grid-template-columns: 759px 201px; }
.canvas { background: #fff; position: relative; overflow: hidden; }
.visual { position: absolute; left: 0; top: 9px; width: 634px; height: 365px; }
.v-title { width: 618px; height: 32px; padding-left: 18px; background: #f4c2ab; color: #7a7a7a; text-align: center; font: oblique 400 15px/38px "DejaVu Sans", sans-serif; letter-spacing: .15px; white-space: nowrap; overflow: hidden; }
.v-table { background: #b0b0b0; height: 333px; padding-left: 9px; position: relative; font-family: "Liberation Sans", Arial, sans-serif; font-weight: 700; -webkit-text-stroke: .2px currentColor; }
.row { display: grid; grid-template-columns: 216px 192px 191px; width: 599px; height: 32px; align-items: center; font-size: 15px; border-bottom: 1px solid #d6d6d6; }
.row span { height: 100%; display: flex; align-items: center; padding: 0 3px; white-space: nowrap; }
.row .c1 { border-right: 1px solid #f3f3f3; letter-spacing: .75px; }
.row .c2 { border-right: 1px solid #d0d0d0; justify-content: flex-end; font-style: italic; letter-spacing: .1px; }
.row .c3 { justify-content: flex-end; font-style: italic; letter-spacing: .1px; }
.head { height: 41px; color: #ad4e24; border-bottom: 2px solid #e0e0e0; }
.head span { justify-content: center !important; padding: 0 0 8px !important; font-style: italic; }
.row.head .c1 { letter-spacing: .55px; border-right-color: #c4c4c4; }
.row.head .c2 { letter-spacing: .65px; border-right-color: #bdbdbd; }
.row.head .c3 { letter-spacing: .65px; }
.a { background: #f4c2ab; color: #7b7b7b; }
.b { background: #e5e5e5; color: #ef8a5f; }
.last { height: 28px; }
.row.last span { padding-top: 3px; }
.total { height: 31px; color: #ad4e24; border-bottom: 0; font-size: 15.500px; }
.total .c1 { border-right-color: #dcdcdc !important; letter-spacing: .55px; }
.row.total .c2 { border-right-color: #bcbcbc; letter-spacing: .55px; }
.row.total .c3 { letter-spacing: .55px; }
.vscroll { position: absolute; left: 620px; top: 53px; width: 7px; height: 270px; border-radius: 3px; background: linear-gradient(#8a8a8a 0 85%, #dadada 85%); }
.hr-title { position: absolute; left: 618px; top: 9px; width: 136px; height: 85px; padding-top: 4px; background: #fff; text-align: center; font: 700 21px/26px "Liberation Sans", Arial, sans-serif; letter-spacing: .2px; -webkit-text-stroke: .3px currentColor; color: #a32d45; }
.dotline { position: absolute; left: 3px; right: 2px; top: 389px; border-top: 2px dotted #555; }
.filters { background: #fff; border-left: 1px solid #b4b4b4; color: #333; padding: 0; letter-spacing: -.3px; }
.f-top { padding: 7px 12px 4px 8px; border-bottom: 1px solid #bdbdbd; height: 43px; }
.f-search { height: 31px; border: 1px solid #a8a8a8; border-radius: 2px; display: flex; align-items: center; padding-left: 12px; gap: 13px; font-size: 12.500px; color: #3c3c3c; }
.r14 { width: 14px; height: 14px; }
.dark { stroke: #444; }
.f-head { display: flex; justify-content: space-between; margin: 0 14px 0 8px; height: 22px; align-items: center; font-size: 12px; color: #333; }
.f-head1 { margin-top: 13px; margin-bottom: 6px; }
.f-head2 { margin-top: 24px; margin-bottom: 5px; }
.more { color: #777; font-size: 10px; }
.f-box { margin: 0 8px 0 8px; height: 46px; border: 1px solid #333; border-radius: 2px; display: flex; align-items: center; justify-content: center; font-size: 12px; color: #333; }

/* page tabs */
.pagebar { display: flex; background: #2a2a2a; border-bottom: 2px solid #555; height: 36px; }
.devices { width: 132px; flex: none; background: #2a2a2a; display: flex; align-items: center; border-left: 1px solid #444; border-right: 1px solid #555; padding-left: 12px; position: relative; }
.devices::after { content: ""; position: absolute; right: 4px; top: 0; bottom: 0; width: 1px; background: #555; }
.dev { width: 44px; flex: none; display: flex; align-items: center; height: 100%; position: relative; }
.dev + .dev { width: 37px; }
.dev .ic { stroke: #fff; stroke-width: 1.400; }
.dev-on::after { content: ""; position: absolute; left: -2px; bottom: 3px; width: 24px; height: 3px; border-radius: 2px; background: #2aab92; }
.arrow { width: 6px; height: 10px; margin-right: 14px; stroke: #c8c8c8; }
.arrow:last-child { margin-right: 0; }
.tab { width: 76.500px; flex: none; border-left: 1px solid #4a4a4a; display: flex; align-items: center; justify-content: center; color: #fff; font-size: 12px; letter-spacing: -.35px; position: relative; padding-top: 1px; }
.tab-s { width: 77px; }
.tab-on { width: 82px; box-shadow: inset 0 -3px 0 #2aab92; font-weight: 700; letter-spacing: -.65px; }
.tab-w { width: 82.700px; }
.tab-x { position: absolute; right: 3px; top: 2px; font-size: 10px; line-height: 12px; font-weight: 700; }
.tab-add { flex: 1; background: #2aab92; display: flex; align-items: center; justify-content: center; }
.plus { width: 12px; height: 12px; stroke: #1d2a28; stroke-width: 2.500; }

/* visualizations pane */
.vis { background: #141414; border-left: 1px solid #6a6a6a; border-right: 1px solid #6a6a6a; padding: 0; position: relative; }
.pane-head { height: 38px; display: flex; align-items: center; justify-content: space-between; padding: 0 10px 0 8px; font-size: 15px; font-weight: 600; color: #fff; letter-spacing: -.1px; }
.dbl { font-size: 14px; font-weight: 700; }
.sub { font-size: 12px; font-weight: 600; letter-spacing: -.35px; height: 19px; line-height: 16px; padding-left: 8px; color: #fff; }
.vis-tabs { display: flex; padding-left: 8px; height: 32px; }
.vt-on { width: 32px; height: 32px; background: #2b2b2b; border-radius: 2px; display: flex; align-items: center; justify-content: center; }
.r28 { width: 26px; height: 26px; }
.tealf { fill: #2aab92; stroke: none; }
.dash { stroke: #c8c8c8; stroke-dasharray: 2 1; }
.vt2 { width: 26px; height: 26px; margin-left: 36px; margin-top: 3px; stroke: #c8c8c8; }
.notchline { margin-top: 12px; height: 1px; background: #555; position: relative; }
.notchline::after { content: ""; position: absolute; left: 19px; top: -5px; width: 10px; height: 10px; background: #141414; border-left: 1px solid #777; border-top: 1px solid #777; transform: rotate(45deg); }
.vizgrid { display: grid; grid-template-columns: repeat(6, 18px); grid-template-rows: repeat(7, 18px); column-gap: 10px; row-gap: 10px; padding: 11px 0 0 11px; }
.vizgrid > :nth-last-child(-n+4) { margin-top: -1px; }
.v { width: 18px; height: 18px; }
.vt { display: flex; align-items: center; justify-content: center; font-weight: 600; color: #2f8ce0; white-space: nowrap; }
.vt-r { font-size: 16px; }
.vt-py { font-size: 17px; letter-spacing: -.5px; }
.vt-more { color: #fff; font-weight: 700; font-size: 12px; padding-bottom: 6px; }
.n123 { fill: #4a9ee6; stroke: none; font: 400 8px "Open Sans", sans-serif; text-anchor: middle; }
.donut { stroke: #1f79cf; stroke-width: 4; }
.donut2 { stroke: #cfcfcf; stroke-width: 4; }
.gcirc { stroke: #8e8e8e; }
.vis-sep { position: absolute; left: 0; right: 0; top: 308px; border-top: 2px solid #8a8a8a; }
.well-label, .drill-title, .toggle-row, .well { position: absolute; }
.well-label { left: 12px; top: 317px; letter-spacing: -.3px; color: #e4e4e4; }
.well { left: 5px; width: 169px; top: 339px; height: 29px; border: 1px dashed #5c5c5c; border-radius: 3px; padding-left: 9px; display: flex; align-items: center; letter-spacing: -.32px; color: #f0f0f0; white-space: nowrap; }
.well-drill { top: 456px; height: 26px; background: #000; padding-left: 7px; letter-spacing: -.25px; }
.drill-title { left: 12px; top: 377px; font-weight: 600; letter-spacing: -.35px; color: #f0f0f0; }
.toggle-row { left: 12px; right: 22px; display: flex; justify-content: space-between; align-items: center; height: 18px; letter-spacing: -.38px; color: #e4e4e4; }
.tr1 { top: 401px; }
.tr2 { top: 428px; }
.toggle { width: 32px; height: 16px; border-radius: 8px; display: flex; align-items: center; justify-content: center; gap: 1px; font-size: 9.500px; }
.toggle i { width: 8px; height: 8px; border-radius: 50%; display: block; }
.off { border: 1px solid #999; color: #9a9a9a; }
.off i { background: #999; }
.on { background: #2aab92; color: #14463c; }
.on i { background: #142; }

/* data pane */
.data { background: #141414; position: relative; display: flex; flex-direction: column; }
.d-search { height: 24px; margin: 7px 4px 0 5px; flex: none; border: 1px solid #7a7a7a; border-radius: 4px; background: #262626; display: flex; align-items: center; padding-left: 11px; gap: 8px; color: #9c9c9c; font-size: 13px; letter-spacing: -.2px; position: relative; z-index: 1; }
.d-listwrap { height: 444px; overflow: hidden; position: relative; flex: none; }
.d-list { margin-top: -2px; }
.d-row { height: 24px; display: flex; align-items: center; padding-left: 44px; white-space: nowrap; letter-spacing: -.36px; color: #f0f0f0; }
.chk { width: 12px; height: 12px; border: 1px solid #a8a8a8; border-radius: 2px; display: block; flex: none; }
.sigma { width: 26px; padding-left: 8px; font-size: 14px; line-height: 14px; flex: none; font-family: "Liberation Sans", sans-serif; font-weight: 400; }
.sig { width: 12px; height: 12px; margin: 0 8px 0 8px; }
.d-scroll { position: absolute; right: 4px; top: 254px; width: 7px; height: 171px; background: #444; }
.d-table { position: absolute; left: 19px; bottom: 6px; display: flex; align-items: center; letter-spacing: -.3px; color: #e8e8e8; }
.d-chev { width: 6px; height: 10px; }
.sig2 { width: 12px; height: 12px; margin: 0 6px 0 4px; }

.activate { position: absolute; left: 1073px; top: 471px; color: rgba(190,190,190,.55); pointer-events: none; white-space: nowrap; }
.a1 { font-size: 19.300px; line-height: 26px; letter-spacing: -.1px; }
.a2 { font-size: 14px; line-height: 20px; letter-spacing: .2px; }

/* status */
.status { background: #161616; border-bottom: 2px solid #000; display: flex; align-items: center; justify-content: space-between; padding: 0 0 0 4px; letter-spacing: -.3px; color: #d8d8d8; }
.st-text { padding-top: 2px; }
.zoomctl { display: flex; align-items: center; }
.zm { width: 8px; font-weight: 700; color: #ddd; }
.slider { width: 101px; height: 1px; background: #dcdcdc; margin-left: -1px; position: relative; }
.thumb { position: absolute; left: 27px; top: -6px; width: 3px; height: 13px; background: #d8d8d8; }
.tick { position: absolute; left: 50px; top: -3px; width: 1px; height: 7px; background: #d8d8d8; }
.zp { margin-left: 5px; font-size: 14px; width: 21px; }
.zv { width: 43px; }
.fit { width: 14px; height: 12px; margin-right: 19px; stroke: #dcdcdc; }
.bgline { stroke: #dcdcdc; }

/* taskbar */
.taskbar { position: relative; display: flex; align-items: center; background: linear-gradient(90deg, #e6f0f8 0%, #dde8f7 30%, #d8e0f5 50%, #dbe5f6 70%, #e4eff8 100%); color: #222; }
.tb-apps { display: flex; margin-left: 508px; }
.app-i { width: 44px; height: 44px; display: flex; align-items: center; justify-content: center; position: relative; }
.t24 { width: 24px; height: 24px; display: block; fill: none; }
.t28 { width: 28px; height: 30px; display: block; margin-bottom: 4px; }
.winf { fill: url(#win); }
.mag { stroke: #1b1b1b; stroke-width: 2.300; }
.wg0 { fill: #263238; }
.wg1 { fill: #e8e8e8; }
.wg2 { fill: #37bdf8; }
.wg3 { fill: #0f6fc4; }
.edge1 { fill: #0f6db8; }
.edge2 { fill: url(#edge); }
.edge3 { fill: #1a8fdc; }
.fold1 { fill: #e6a817; }
.fold2 { fill: #fcd45a; }
.fold3 { fill: #1e88d8; }
.wps { width: 26px; height: 26px; border-radius: 50%; background: #f0401c; color: #fff; display: flex; align-items: center; justify-content: center; font: 700 15px "Liberation Sans", sans-serif; }
.st0 { fill: #1a5a96; }
.st1 { stroke: #2b8fd8; stroke-width: 2; fill: none; }
.sr { fill: #e8502f; } .sg { fill: #6cb52d; } .sb { fill: #1ea2e8; } .sy { fill: #f8b912; }
.app-active { width: 37px; margin-left: 4px; background: #f4f7fc; border-radius: 4px; box-shadow: 2px 0 0 #eef1f8, 0 0 2px #c6ccd8; }
.pb1 { fill: #ffe26a; } .pb2 { fill: #f7c92f; } .pb3 { fill: #d39c12; }
.act { position: absolute; bottom: 1px; left: 10px; width: 17px; height: 3px; border-radius: 2px; background: #0f78d4; }
.tray { position: absolute; left: 1113px; top: 0; height: 48px; display: flex; align-items: center; }
.tray .ic { stroke: #1f1f1f; }
.tr-chev { width: 13px; height: 8px; margin-right: 9px; }
.tr-i { width: 18px; height: 18px; margin-right: 6px; }
.cl-f { fill: #666; stroke: none; }
.cl-s { stroke: #1d7fd6 !important; stroke-width: 1.500; fill: #fff; }
.bk { fill: #1f1f1f; stroke: none; }
.lang { display: flex; flex-direction: column; align-items: center; width: 38px; margin-left: -5px; line-height: 17px; font-size: 12px; letter-spacing: -.2px; }
.clock { display: flex; flex-direction: column; align-items: center; width: 72px; margin-left: 0; line-height: 16px; font-size: 12px; letter-spacing: -.3px; }
.tr-note { width: 18px; height: 18px; margin-left: 12px; stroke-width: 1.200; }
```
